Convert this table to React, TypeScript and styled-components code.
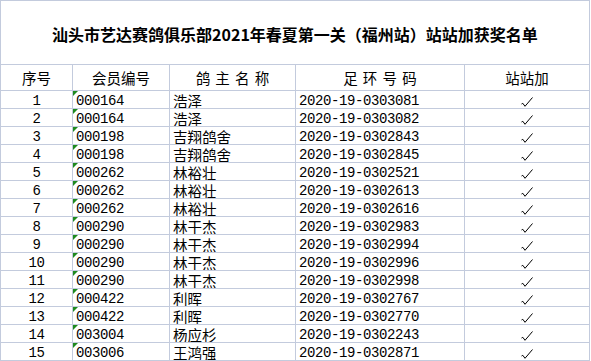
import styled, { createGlobalStyle } from 'styled-components';

const GlobalStyle = createGlobalStyle`
  html, body {
    margin: 0;
    padding: 0;
    background: #ffffff;
  }
  body {
    font-family: 'Noto Sans CJK SC', sans-serif;
    color: #000000;
  }
`;

const LINE = '#c3cbdd';

const Sheet = styled.div`
  display: grid;
  grid-template-columns: 72px 97px 126px 169px 125px;
  grid-template-rows: 64px 26px;
  grid-auto-rows: 18px;
  width: max-content;
  border-left: 1px solid ${LINE};
  border-top: 1px solid ${LINE};
`;

const Title = styled.div`
  grid-column: 1 / -1;
  box-sizing: border-box;
  display: flex;
  justify-content: center;
  align-items: center;
  padding-top: 3px;
  border-right: 1px solid ${LINE};
  border-bottom: 1px solid ${LINE};
  font-family: 'Noto Sans CJK SC', sans-serif;
  font-weight: 700;
  font-size: 16px;
`;

const HeadCell = styled.div<{ $spaced?: boolean }>`
  box-sizing: border-box;
  display: flex;
  justify-content: center;
  align-items: center;
  border-right: 1px solid ${LINE};
  border-bottom: 1px solid ${LINE};
  font-size: 14.5px;
  word-spacing: ${(p) => (p.$spaced ? '2px' : '0')};
  white-space: pre;
`;

const Cell = styled.div<{ $align?: 'left' | 'center'; $mono?: boolean; $flag?: boolean }>`
  position: relative;
  box-sizing: border-box;
  display: flex;
  align-items: flex-end;
  justify-content: ${(p) => (p.$align === 'center' ? 'center' : 'flex-start')};
  padding-left: ${(p) => (p.$align === 'center' ? '0' : '3px')};
  border-right: 1px solid ${LINE};
  border-bottom: 1px solid ${LINE};
  font-family: ${(p) =>
    p.$mono ? "'Liberation Mono', monospace" : "'Noto Sans CJK SC', sans-serif"};
  font-size: ${(p) => (p.$mono ? '14px' : '14.5px')};
  letter-spacing: ${(p) => (p.$mono ? '-0.4px' : '0')};
  line-height: 1;
  white-space: nowrap;
  overflow: hidden;

  &::before {
    content: '';
    display: ${(p) => (p.$flag ? 'block' : 'none')};
    position: absolute;
    left: 0;
    top: 0;
    width: 0;
    height: 0;
    border-top: 5px solid #1e8a1e;
    border-right: 5px solid transparent;
  }
`;

const Tick = styled.svg`
  display: block;
  width: 12px;
  height: 10px;
  margin-bottom: 1px;
  margin-left: -1px;
`;

function CheckMark() {
  return (
    <Tick viewBox="0 0 12 10">
      <polyline
        points="0.5,7 1.8,6.3 4,9.3 11.5,0.5"
        fill="none"
        stroke="#000"
        strokeWidth="1"
        strokeLinejoin="round"
      />
    </Tick>
  );
}

type Row = { member: string; owner: string; ring: string };

const rows: Row[] = [
  { member: '000164', owner: '浩泽', ring: '2020-19-0303081' },
  { member: '000164', owner: '浩泽', ring: '2020-19-0303082' },
  { member: '000198', owner: '吉翔鸽舍', ring: '2020-19-0302843' },
  { member: '000198', owner: '吉翔鸽舍', ring: '2020-19-0302845' },
  { member: '000262', owner: '林裕壮', ring: '2020-19-0302521' },
  { member: '000262', owner: '林裕壮', ring: '2020-19-0302613' },
  { member: '000262', owner: '林裕壮', ring: '2020-19-0302616' },
  { member: '000290', owner: '林干杰', ring: '2020-19-0302983' },
  { member: '000290', owner: '林干杰', ring: '2020-19-0302994' },
  { member: '000290', owner: '林干杰', ring: '2020-19-0302996' },
  { member: '000290', owner: '林干杰', ring: '2020-19-0302998' },
  { member: '000422', owner: '利晖', ring: '2020-19-0302767' },
  { member: '000422', owner: '利晖', ring: '2020-19-0302770' },
  { member: '003004', owner: '杨应杉', ring: '2020-19-0302243' },
  { member: '003006', owner: '王鸿强', ring: '2020-19-0302871' },
];

function App() {
  return (
    <>
      <GlobalStyle />
      <Sheet>
        <Title>汕头市艺达赛鸽俱乐部2021年春夏第一关（福州站）站站加获奖名单</Title>
        <HeadCell>序号</HeadCell>
        <HeadCell>会员编号</HeadCell>
        <HeadCell $spaced>鸽 主 名 称</HeadCell>
        <HeadCell $spaced>足 环 号 码</HeadCell>
        <HeadCell>站站加</HeadCell>
        {rows.map((row, index) => (
          <div key={index} style={{ display: 'contents' }}>
            <Cell $align="center" $mono>
              {index + 1}
            </Cell>
            <Cell $mono $flag>
              {row.member}
            </Cell>
            <Cell>{row.owner}</Cell>
            <Cell $mono>{row.ring}</Cell>
            <Cell $align="center">
              <CheckMark />
            </Cell>
          </div>
        ))}
      </Sheet>
    </>
  );
}

export default App;
